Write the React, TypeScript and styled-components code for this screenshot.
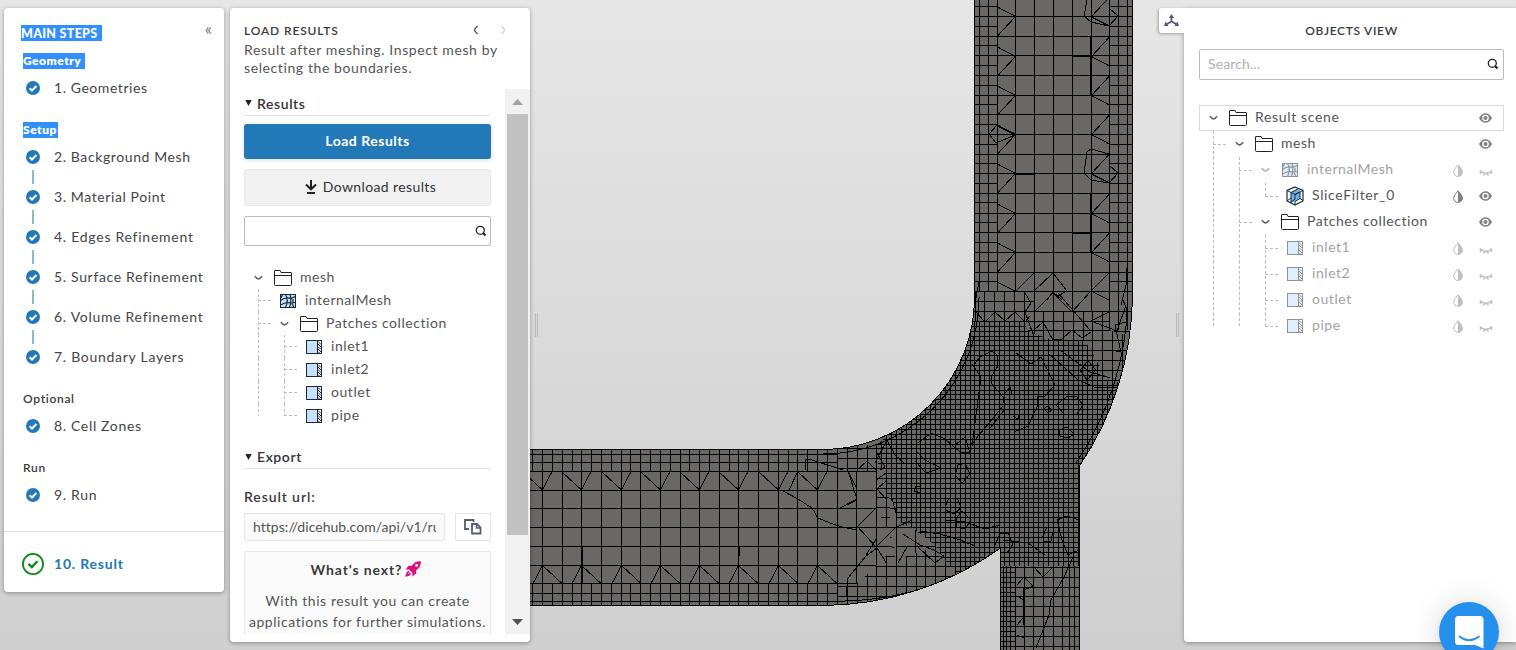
import React from 'react';
import styled, { createGlobalStyle, css } from 'styled-components';

const Global = createGlobalStyle`
  * { box-sizing: border-box; }
  html, body { margin: 0; height: 100%; overflow: hidden; }
  body {
    font-family: Lato, "Noto Sans", sans-serif;
    font-size: 14px;
    letter-spacing: 0.6px;
    color: #444;
    background: linear-gradient(#e6e6e6, #cfcfcf);
    font-variant-ligatures: none;
  }
`;

/* ---------- page frame ---------- */

const Page = styled.main`
  position: relative;
  height: 650px;
  width: 1516px;
  overflow: hidden;
  display: flex;
  align-items: flex-start;
  padding: 8px 0 0 4px;
  background: linear-gradient(#e6e6e6, #cfcfcf);
`;

const Viewport = styled.svg`
  position: absolute;
  inset: 0;
`;

const panel = css`
  position: relative;
  background: #fff;
  border-radius: 4px;
  box-shadow: 0 1px 4px rgba(0, 0, 0, 0.35);
`;

const StepsPanel = styled.nav`
  ${panel}
  width: 220px;
  height: 584px;
  margin-right: 6px;
`;

const DetailPanel = styled.section`
  ${panel}
  width: 300px;
  height: 634px;
  display: flex;
  flex-direction: column;
`;

const ObjectsPanel = styled.aside`
  ${panel}
  border-radius: 0 0 0 4px;
  width: 332px;
  height: 634px;
  padding: 0 12px 0 15px;
`;

const Handle = styled.div`
  width: 3px;
  height: 24px;
  border: solid #b9b9b9;
  border-width: 0 1px;
  margin-top: 305px;
`;

const LeftHandle = styled(Handle)`
  margin-left: 5px;
  margin-right: auto;
`;

const RightHandle = styled(Handle)`
  margin-right: 5px;
`;

const Title = styled.h1`
  margin: 0;
  font-size: 12px;
  line-height: 16px;
  font-weight: 600;
  letter-spacing: 0.86px;
  color: #3a3a3a;
`;

/* ---------- steps ---------- */

const StepsHeader = styled.header`
  display: flex;
  justify-content: space-between;
  padding: 17px 12px 12px 17px;
`;

const MainTitle = styled(Title)`
  width: 81px;
  height: 16px;
  line-height: 17px;
  font-size: 12.5px;
  font-weight: 900;
  letter-spacing: 0.3px;
  color: #fff;
  background: #338fff;
`;

const Collapse = styled.span`
  font-size: 17px;
  line-height: 7px;
  letter-spacing: 0;
  color: #777;
`;

const Group = styled.section`
  margin-bottom: 14px;
`;

const GroupLabel = styled.h2<{ $selected?: number }>`
  margin: 0 0 -1px 19px;
  font-size: 12px;
  line-height: 16px;
  height: 16px;
  font-weight: 600;
  letter-spacing: 0.7px;
  color: #3a3a3a;
  white-space: nowrap;
  ${p => p.$selected && css`
    width: ${p.$selected}px;
    background: #338fff;
    color: #fff;
    font-weight: 800;
    letter-spacing: 0.5px;
  `}
`;

const StepRow = styled.div`
  position: relative;
  display: flex;
  align-items: center;
  height: 40px;
  padding-left: 22px;
  gap: 14px;
  color: #444;
`;

const StepName = styled.span<{ $ls: number }>`
  padding-bottom: 2px;
  letter-spacing: ${p => p.$ls}px;
  white-space: nowrap;
`;

const Connector = styled.i`
  position: absolute;
  left: 28px;
  top: 33px;
  width: 2px;
  height: 14px;
  background: #8bb7da;
`;

const ResultStep = styled.footer`
  display: flex;
  align-items: center;
  height: 61px;
  margin-top: 16px;
  padding: 4px 0 0 18px;
  gap: 10px;
  border-top: 1px solid #e2e2e2;
  color: #2379b7;
  font-weight: 700;
`;

const StepGroups = styled.div`
  height: 462px;
`;

const CheckDot = () => (
  <svg width="14" height="14" viewBox="0 0 14 14">
    <circle cx="7" cy="7" r="7" fill="#2379b7" />
    <path d="M3.6 7.2 6 9.5 10.4 5" fill="none" stroke="#fff" strokeWidth="2" />
  </svg>
);

const ResultCheck = () => (
  <svg width="22" height="22" viewBox="0 0 22 22">
    <circle cx="11" cy="11" r="10.1" fill="#fff" stroke="#0a8a12" strokeWidth="1.8" />
    <path d="M6.5 10.8 9.8 14l5.6-5.8" fill="none" stroke="#0a8a12" strokeWidth="2.3" />
  </svg>
);

/* ---------- detail panel ---------- */

const DetailHeader = styled.header`
  display: flex;
  align-items: center;
  padding: 15px 23px 0 14px;
  height: 31px;
`;

const HeaderArrows = styled.span`
  display: flex;
  gap: 19px;
  margin: -2px 0 0 auto;
`;

const Intro = styled.p`
  margin: 2px 14px 0;
  line-height: 18px;
  letter-spacing: 0.6px;
  color: #555;
  height: 48px;
  white-space: pre;
`;

const ScrollArea = styled.div`
  display: flex;
  height: 545px;
`;

const ScrollBody = styled.div`
  flex: 1;
  height: 545px;
  overflow: hidden;
  padding: 0 14px;
`;

const ScrollTrack = styled.div`
  width: 25px;
  background: #f1f1f1;
  display: flex;
  flex-direction: column;
  align-items: center;
`;

const ScrollButton = styled.span`
  height: 25px;
  display: flex;
  align-items: center;
`;

const Thumb = styled.div`
  width: 21px;
  height: 421px;
  margin-bottom: auto;
  background: #c1c1c1;
`;

const SectionTitle = styled.h2`
  display: flex;
  align-items: center;
  gap: 5px;
  height: 24px;
  margin: 0;
  padding: 0 0 0 1px;
  border-bottom: 1px solid #e5e5e5;
  font-size: 14px;
  font-weight: 600;
  letter-spacing: 0.58px;
  color: #333;
`;

const ResultsTitle = styled(SectionTitle)`
  height: 27px;
  padding-top: 2px;
`;

const ExportTitle = styled(SectionTitle)`
  margin-top: 18px;
`;

const PrimaryButton = styled.button`
  display: block;
  width: 247px;
  height: 35px;
  margin-top: 8px;
  padding: 0 0 2px;
  border: 0;
  border-radius: 3px;
  background: #2379b7;
  color: #fff;
  font: 700 14px Lato, sans-serif;
  letter-spacing: 0.52px;
  box-shadow: 0 1px 4px rgba(0, 0, 0, 0.15);
`;

const SecondaryButton = styled.button`
  display: flex;
  align-items: center;
  justify-content: center;
  gap: 6px;
  width: 247px;
  height: 37px;
  margin-top: 10px;
  padding: 0 0 2px 6px;
  border: 1px solid #e6e6e6;
  border-radius: 3px;
  background: #f1f1f1;
  color: #333;
  font: 400 14px Lato, sans-serif;
  letter-spacing: 0.38px;
`;

const SearchBox = styled.div`
  display: flex;
  align-items: center;
  justify-content: space-between;
  border: 1px solid #bbb;
  border-radius: 2px;
  height: 30px;
  margin-top: 10px;
  padding: 0 3px 1px 8px;
  color: #b0b0b0;
  letter-spacing: 0.11px;
`;

const ObjectSearch = styled(SearchBox)`
  height: 31px;
  margin-top: 10px;
  padding: 0 4px 2px 8px;
`;

const FieldLabel = styled.div`
  margin: 20px 0 8px;
  line-height: 16px;
  font-weight: 600;
  letter-spacing: 0.9px;
  color: #3a3a3a;
`;

const UrlRow = styled.div`
  display: flex;
  gap: 10px;
`;

const UrlField = styled.div`
  width: 201px;
  height: 28px;
  padding: 0 8px;
  border: 1px solid #e5e5e5;
  border-radius: 2px;
  background: #fafafa;
`;

const UrlText = styled.div`
  overflow: hidden;
  white-space: nowrap;
  line-height: 26px;
  letter-spacing: 0.04px;
  color: #555;
`;

const CopyButton = styled.button`
  width: 36px;
  height: 28px;
  padding: 0;
  display: flex;
  align-items: center;
  justify-content: center;
  border: 1px solid #e5e5e5;
  background: #fff;
`;

const NextCard = styled.div`
  height: 120px;
  margin-top: 10px;
  padding-top: 7px;
  border: 1px solid #e8e8e8;
  border-radius: 2px;
  background: #fafafa;
  text-align: center;
`;

const NextTitle = styled.div`
  display: flex;
  justify-content: center;
  align-items: center;
  gap: 3px;
  height: 20px;
  padding-right: 3px;
  font-weight: 700;
  letter-spacing: 0.88px;
  color: #3a3a3a;
`;

const NextText = styled.p`
  margin: 11px 0 0;
  line-height: 21px;
  letter-spacing: 0.56px;
  color: #555;
  white-space: pre;
`;

/* ---------- tree ---------- */

const Tree = styled.div<{ $row: number }>`
  display: grid;
  grid-auto-rows: ${p => p.$row}px;
  --lift: 2px;
`;

const DetailTree = styled(Tree)`
  margin: 20px 0 0 1px;
`;

const ObjectTree = styled(Tree)`
  margin: 25px 0 0;
  --lift: 4px;
`;

const TreeRow = styled.div<{ $boxed?: boolean; $faded?: boolean }>`
  display: flex;
  align-items: center;
  border: 1px solid ${p => (p.$boxed ? '#dadada' : 'transparent')};
  border-width: ${p => (p.$boxed ? '1px' : '0 1px')};
  color: #555;
  --fade: ${p => (p.$faded ? 0.5 : 1)};
`;

const PlainRow = styled(TreeRow)`
  border-width: 0;
`;

const Guide = styled.span<{ $tick?: boolean; $half?: boolean }>`
  align-self: stretch;
  width: 26px;
  background-image:
    repeating-linear-gradient(#bdbdbd 0 3px, transparent 3px 5px),
    repeating-linear-gradient(90deg, #bdbdbd 0 3px, transparent 3px 5px);
  background-repeat: no-repeat;
  background-position: 13px 0, 13px 50%;
  background-size: 1px ${p => (p.$half ? '50%' : '100%')}, ${p => (p.$tick ? '13px' : '0')} 1px;
`;

const ChevronCell = styled.span`
  width: 26px;
  display: flex;
  justify-content: center;
  opacity: var(--fade);
`;

const IconCell = styled.span<{ $l: number; $r: number }>`
  display: flex;
  margin: 0 ${p => p.$r}px 0 ${p => p.$l}px;
  opacity: var(--fade);
`;

const Name = styled.span<{ $ls?: number }>`
  padding-bottom: var(--lift);
  letter-spacing: ${p => p.$ls ?? 0.55}px;
  opacity: calc(0.1 + 0.9 * var(--fade));
  white-space: nowrap;
`;

const Actions = styled.span<{ $closed?: boolean }>`
  display: flex;
  align-items: center;
  gap: 16px;
  margin-left: auto;
  padding-right: ${p => (p.$closed ? 10 : 11)}px;
  opacity: var(--fade);
`;

const Chevron = () => (
  <svg width="9" height="6" viewBox="0 0 9 6">
    <path d="M.8 1.2 Q3 3.8 4.5 4 Q6 3.8 8.2 1.2" fill="none" stroke="#565d70" strokeWidth="1.4" />
  </svg>
);

const Folder = () => (
  <svg width="18" height="16" viewBox="0 0 18 16">
    <path d="M.5 14.5V1Q.5.5 1 .5H6.2L7 2.5H17Q17.5 2.5 17.5 3V14.5Q17.5 15.5 16.500 15.500H1.500Q.5 15.500.5 14.500ZM.5 5.500H17.500" fill="#fff" stroke="#222" />
  </svg>
);

const MeshIcon = () => (
  <svg width="16" height="14" viewBox="0 0 16 14">
    <rect x=".5" y=".5" width="15" height="13" fill="#c5e1fd" stroke="#1c2836" />
    <path d="M5.500.5Q9 6 5.500 13.500M10 .5Q12 7 9.500 13.500M.5 6.500Q5 3 11 4.300L15.500 2.500M.5 11Q6 7.500 11 9L15.500 8.500M2.500 1 1 4M13 5V8.500M12 9.500 14 13.500" fill="none" stroke="#1c2836" strokeWidth="1.200" />
  </svg>
);

const PatchIcon = () => (
  <svg width="16" height="14" viewBox="0 0 16 14">
    <rect x=".5" y=".5" width="15" height="13" fill="#c5e1fd" stroke="#1c2836" />
    <rect x="12" y="1" width="3" height="12" fill="#fff" />
    <path d="M11.500 1V13M12 1.500 15 4.500M12 4 15 7M12 6.500 15 9.500M12 9 15 12M12 11.500 13.500 13" fill="none" stroke="#1c2836" strokeWidth="1" />
  </svg>
);

const SliceIcon = () => (
  <svg width="18" height="20" viewBox="0 0 18 20">
    <path d="M9 1 17 4.500V15L9 19 1 15V4.500Z" fill="#fff" stroke="#1c2836" strokeWidth="1.200" />
    <path d="M5 6.500 11.500 3 14 4.500V12.500L9.500 15.500 5 16.500Z" fill="#6cb0f2" />
    <path d="M1 4.500 5 6.500 9 8.500 17 4.500M9 8.500V13L5 16.500V6.500L12 3M9 8.500 14 6V12.500L9 15.500V19M1 15 5 12M14 12.500 17 14.500" fill="none" stroke="#1c2836" />
  </svg>
);

const Eye = () => (
  <svg width="13" height="10" viewBox="0 0 13 10">
    <path d="M0 5Q2.500.2 6.500.2T13 5Q10.500 9.800 6.500 9.800T0 5Z" fill="#808080" />
    <circle cx="6.500" cy="5" r="3.300" fill="#fff" />
    <circle cx="6.500" cy="5" r="2" fill="#808080" />
  </svg>
);

const EyeClosed = () => (
  <svg width="14" height="14" viewBox="0 0 14 14">
    <path d="M.8 7.500Q7 13.500 13.200 7.500M2.600 9 1 10.800M5.400 10.300 4.800 12.400M8.600 10.300 9.200 12.400M11.400 9 13 10.800" fill="none" stroke="#808080" strokeWidth="1.700" />
  </svg>
);

const Drop = () => (
  <svg width="10" height="13" viewBox="0 0 10 13">
    <path d="M5 .8Q.6 5.500.6 8.200A4.400 4.200 0 0 0 5 12.400 4.400 4.200 0 0 0 9.400 8.200Q9.400 5.500 5 .8Z" fill="#fff" stroke="#808080" />
    <path d="M5 .5Q9.700 5.500 9.700 8.200A4.600 4.400 0 0 1 5 12.600Z" fill="#808080" />
  </svg>
);

const Search = () => (
  <svg width="12" height="12" viewBox="0 0 12 12">
    <circle cx="5.300" cy="5.300" r="4" fill="none" stroke="#222" strokeWidth="1.300" />
    <path d="M7.800 7.800 10.500 10.500" stroke="#222" strokeWidth="2" />
  </svg>
);

type Kind = 'folder' | 'mesh' | 'patch' | 'slice';
const icons = { folder: Folder, mesh: MeshIcon, patch: PatchIcon, slice: SliceIcon };

interface Node {
  name: string;
  kind: Kind;
  depth: number;
  open?: boolean;
  hidden?: boolean;
  drop?: boolean;
  last?: boolean;
  end?: boolean;
  ls?: number;
}

const patches = (hidden: boolean, depth: number): Node[] => [
  { name: 'inlet1', kind: 'patch', depth, hidden, drop: true },
  { name: 'inlet2', kind: 'patch', depth, hidden, drop: true },
  { name: 'outlet', kind: 'patch', depth, hidden, drop: true },
  { name: 'pipe', kind: 'patch', depth, hidden, drop: true, last: true, end: true },
];

const meshNodes: Node[] = [
  { name: 'mesh', kind: 'folder', depth: 0, open: true },
  { name: 'internalMesh', kind: 'mesh', depth: 1, ls: 0.5 },
  { name: 'Patches collection', kind: 'folder', depth: 1, open: true },
  ...patches(false, 2),
];

const sceneNodes: Node[] = [
  { name: 'Result scene', kind: 'folder', depth: 0, open: true, ls: 0.66 },
  { name: 'mesh', kind: 'folder', depth: 1, open: true },
  { name: 'internalMesh', kind: 'mesh', depth: 2, open: true, hidden: true, drop: true, ls: 0.5 },
  { name: 'SliceFilter_0', kind: 'slice', depth: 3, drop: true, last: true, ls: 0.65 },
  { name: 'Patches collection', kind: 'folder', depth: 2, open: true },
  ...patches(true, 3),
];

function RowContent({ node }: { node: Node }) {
  const Icon = icons[node.kind];
  const left = node.open ? (node.kind === 'folder' ? 3 : 4) : node.kind === 'slice' ? 8 : 9;
  const right = node.kind === 'folder' ? 8 : node.kind === 'slice' ? 8 : 9;
  return (
    <>
      {Array.from({ length: node.depth }, (_, i) => (
        <Guide key={i} $tick={i === node.depth - 1} $half={node.end || (node.last && i === node.depth - 1)} />
      ))}
      {node.open && <ChevronCell><Chevron /></ChevronCell>}
      <IconCell $l={left} $r={right}><Icon /></IconCell>
      <Name $ls={node.ls}>{node.name}</Name>
    </>
  );
}

/* ---------- objects panel extras ---------- */

const ObjectsTitle = styled(Title)`
  padding-top: 15px;
  height: 31px;
  text-align: center;
  letter-spacing: 0.68px;
`;

const AxesTab = styled.div`
  position: absolute;
  left: -25px;
  top: 0;
  width: 25px;
  height: 25px;
  display: flex;
  align-items: center;
  justify-content: center;
  border-radius: 3px 0 0 3px;
  background: #fff;
  box-shadow: -1px 1px 3px rgba(0, 0, 0, 0.3);
`;

const TabBridge = styled.div`
  position: absolute;
  left: 0;
  top: 0;
  width: 5px;
  height: 28px;
  background: #fff;
`;

const ChatBubble = styled.div`
  position: absolute;
  left: 1439px;
  top: 602px;
  width: 60px;
  height: 60px;
  border-radius: 50%;
  background: #2590eb;
  box-shadow: 0 1px 6px rgba(0, 0, 0, 0.06), 0 2px 32px rgba(0, 0, 0, 0.16);
  display: flex;
  justify-content: center;
  padding-top: 14px;
`;

/* ---------- mesh slice drawing ---------- */

const range = (from: number, to: number, step: number) => {
  const out: number[] = [];
  for (let v = from; v <= to + 0.01; v += step) out.push(Math.round(v));
  return out;
};

const gridPath = (xs: number[], ys: number[], x0: number, x1: number, y0: number, y1: number) =>
  xs.map(x => `M${x + 0.5} ${y0}V${y1}`).join('') + ys.map(y => `M${x0} ${y + 0.5}H${x1}`).join('');

const OUTLINE =
  'M520 449.500H822A152 152 0 0 0 974.500 297V-5H1132.500V297A310 310 0 0 1 1079.500 466V660H1000.500V548A309 309 0 0 1 822 605.500H520Z';

const riserCols = [997, 1015, 1034, 1053, 1072, 1091, 1109];
const riserRows = range(16, 410, 19.66);
const runCols = range(542, 960, 19.65);
const runRows = [471, 490, 508, 527, 546, 565, 583];

const riser = gridPath(riserCols, riserRows, 974, 1133, 0, 400);
const riserSides =
  gridPath([979, 988, 1118, 1127], [], 0, 0, 0, 330) +
  range(6.2, 300, 19.63).map(y => `M974 ${y + 0.5}H997M1109 ${y + 0.5}H1133`).join('');
const run =
  runCols.map(x => `M${x + 0.5} 449V606`).join('') + runRows.map(y => `M530 ${y + 0.5}H960`).join('');
const runSides =
  [454, 462, 593, 601].map(y => `M530 ${y + 0.5}H840`).join('') +
  range(532.2, 830, 19.65).map(x => `M${x + 0.5} 449V471M${x + 0.5} 583V606`).join('');

const riserTriangles = [16, 56, 95, 134, 173, 213, 252]
  .map(y => `M997.500 ${y - 9}L1015.500 ${y + 0.5}L997.500 ${y + 20}M1109.500 ${y - 19}L1091.500 ${y + 0.5}L1109.500 ${y + 10}`)
  .join('');
const runTriangles = range(542, 830, 39.3)
  .map(x => `M${x - 19.5} 471.500L${x + 0.5} 490L${x + 10} 471.500M${x - 9} 583.500L${x + 0.5} 565.500L${x + 20} 583.500`)
  .join('');

/* Regions where each refinement level replaces the coarser one. */
const UPPER_MEDIUM = 'M970 291H1034V312L1053 340 1034 350H960ZM1034 312H1109V330L1125 335V372L1140 400H1080L1034 350Z';
const LOWER_MEDIUM = 'M837 445H890V540L896 560 925 550 990 575 935 611H837V584H857L877 565 896 546 886 527 876 508V471H837Z';
const FINE = 'M960 322H1022L1030 332 1055 341H1085L1092 352 1108 382H1130L1085 470H1080V567H1000V548L960 576 945 560 935 545 915 530 896 520V505L886 495V472L878 465V444L905 420 950 375Z';
const BRANCH = 'M1000 566H1080V660H1000Z';

const mediumGrid = gridPath(range(837.1, 1140, 9.82), range(291.2, 610, 9.82), 837, 1140, 291, 611);
const fineGrid = gridPath(range(837, 1135, 4.91), range(311, 660, 4.91), 830, 1135, 300, 660);
const branchGrid =
  gridPath([1003, 1006, 1010, 1015, 1024, 1033, 1043, 1053, 1062, 1069, 1074], [], 0, 0, 566, 650) +
  range(567, 650, 9.82).map(y => `M1015 ${y + 0.5}H1080`).join('') +
  range(567, 650, 4.91).map(y => `M1000 ${y + 0.5}H1015`).join('');

const extraLines =
  'M1087 0 1084 16 1091 22 1109 26 1091 17M1109 8 1118 16 1109 26' +
  'M1091 149 1109 154M1091 149 1087 152 1084 173 1091 180 1109 183 1091 174M1109 165 1118 173 1109 183' +
  'M997 125 989 134 996 143 1015 135 997 126 1016 134' +
  'M997 282 1015 291M1016 291 1034 273M1034 291 1053 273 1067 291 1058 296M1091 291 1109 273M1091 291 1109 300M1047 300 1053 292 1062 300' +
  'M976 298 979 281 980 268M1126 268V285L1121 305' +
  'M783 491 798 499 812 508 818 518 830 523 842 527 857 530M840 508 857 499 848 471M789 490 798 471M805 470V460L809 459 843 470' +
  'M975 311 985 322 995 312 1005 321 1015 312 1025 322 1030 316M1025 293 1031 303 1025 312 1033 334' +
  'M1035 311 1053 293 1072 312 1091 291M1058 293 1090 330M1091 321 1109 312M1091 321 1117 331 1126 305M1034 330 1043 322 1053 340 1062 339 1072 330 1082 338 1091 332' +
  'M974 365 980 357 992 351 997 355 998 366 991 377 992 384 1003 397 1005 409 990 428' +
  'M972 364 981 377 978 400 975 423 972 446M1016 353 1031 364 1041 357 1055 385 1045 396 1037 397 1037 407 1028 426 1014 432M1049 354 1063 366 1077 379 1094 387H1117' +
  'M1056 405 1066 397 1076 396 1083 405 1077 414 1064 414ZM1044 409 1047 406 1052 410 1048 413ZM1059 430 1067 427 1074 434 1068 438 1060 436Z' +
  'M1080 370 1088 361 1096 370 1087 380ZM1005 393 1010 387 1012 395M1013 416 1018 419 1019 414' +
  'M918 443 931 433 945 439 960 452 970 453 965 437 955 445M970 446 1003 406M916 451 925 460 941 468 926 473 915 461M955 475 958 465 965 463 970 474 962 483 955 475' +
  'M914 491 916 486 921 487M914 491 921 493M945 507 949 498 957 498 961 507 955 514 945 510ZM956 519 962 511 971 520 965 529 957 527Z' +
  'M875 463 887 440 895 455 905 464M876 451 885 467 880 470M867 461 857 470M867 461 877 471M876 480 886 473M886 481 877 489 886 499M848 471 857 489' +
  'M840 508 857 500M892 498 897 517M858 526 876 508M857 526 876 547 895 528 912 520M877 548 866 556 848 578 846 596M877 548 887 564M898 563 907 547 917 546 935 563 944 556 934 550 920 545 903 534M866 555 877 538' +
  'M1042 538 1047 527 1054 527 1051 541 1043 541M1057 520 1067 516 1079 520M1057 520 1062 540 1068 555 1079 550M1074 555 1064 577 1051 600 1049 615 1036 648' +
  'M1034 567 1043 577 1053 567M1062 567V577M1024 577 1033 586 1024 590M1017 585 1023 578M1017 596 1024 600M1017 625 1023 618M1017 635 1024 638' +
  'M995 545 1000 534 1008 533 1013 544 1007 553M920 531 940 534 960 540 975 546M945 520 965 522 985 529 1000 525M1003 540 1028 543 1045 555' +
  'M1123 300 1127 310 1126 322 1115 325 1121 352 1111 350M1060 350 1090 372 1110 378';

const FILL = '#696864';

const MeshView = () => (
  <Viewport width="1516" height="650" viewBox="0 0 1516 650">
    <defs>
      <clipPath id="pipe"><path d={OUTLINE} /></clipPath>
      <clipPath id="medium"><path d={UPPER_MEDIUM + LOWER_MEDIUM} /></clipPath>
      <clipPath id="fine"><path d={FINE} /></clipPath>
    </defs>
    <g clipPath="url(#pipe)" fill="none" stroke="#000" shapeRendering="crispEdges">
      <path d={OUTLINE} fill={FILL} stroke="none" />
      <path d={riser + riserSides + run + runSides} />
      <path d={riserTriangles + runTriangles} />
      <path d="M1091 36V95M1091 193V252M1073 56H1091M1015 174H1034M1073 233H1091M582 547V583M739 547V556" strokeWidth="2" />
      <path d={UPPER_MEDIUM + LOWER_MEDIUM} fill={FILL} stroke="none" />
      <path d={mediumGrid} clipPath="url(#medium)" />
      <path d={FINE} fill={FILL} stroke="none" />
      <path d={fineGrid} clipPath="url(#fine)" />
      <path d={BRANCH} fill={FILL} stroke="none" />
      <path d={branchGrid} />
      <path d="M1024 587V625" strokeWidth="2" />
      <path d={extraLines} />
      <path d="M822 454A156 156 0 0 0 979 297M1128 297A305 305 0 0 1 1076 463M1000 553A304 304 0 0 1 822 601" />
    </g>
    <path d={OUTLINE} fill="none" stroke="#000" shapeRendering="crispEdges" />
  </Viewport>
);

/* ---------- app ---------- */

interface Step { name: string; ls: number }

const groups: { label: string; selected?: number; steps: Step[] }[] = [
  { label: 'Geometry', selected: 62, steps: [{ name: '1. Geometries', ls: 0.56 }] },
  {
    label: 'Setup',
    selected: 35,
    steps: [
      { name: '2. Background Mesh', ls: 0.6 },
      { name: '3. Material Point', ls: 0.6 },
      { name: '4. Edges Refinement', ls: 0.74 },
      { name: '5. Surface Refinement', ls: 0.67 },
      { name: '6. Volume Refinement', ls: 0.71 },
      { name: '7. Boundary Layers', ls: 0.72 },
    ],
  },
  { label: 'Optional', steps: [{ name: '8. Cell Zones', ls: 0.66 }] },
  { label: 'Run', steps: [{ name: '9. Run', ls: 0.7 }] },
];

const Triangle = () => (
  <svg width="7" height="6" viewBox="0 0 7 6"><path d="M.3 0H6.700L3.500 6Z" fill="#222" /></svg>
);

export default function App() {
  return (
    <Page>
      <Global />
      <MeshView />

      <StepsPanel>
        <StepsHeader>
          <MainTitle>MAIN STEPS</MainTitle>
          <Collapse>«</Collapse>
        </StepsHeader>
        <StepGroups>
          {groups.map(g => (
            <Group key={g.label}>
              <GroupLabel $selected={g.selected}>{g.label}</GroupLabel>
              {g.steps.map((s, i) => (
                <StepRow key={s.name}>
                  <CheckDot />
                  <StepName $ls={s.ls}>{s.name}</StepName>
                  {i < g.steps.length - 1 && <Connector />}
                </StepRow>
              ))}
            </Group>
          ))}
        </StepGroups>
        <ResultStep><ResultCheck /><StepName $ls={0.81}>10. Result</StepName></ResultStep>
      </StepsPanel>

      <DetailPanel>
        <DetailHeader>
          <Title>LOAD RESULTS</Title>
          <HeaderArrows>
            <svg width="8" height="10" viewBox="0 0 8 10"><path d="M5.500 1Q2.500 4 2.500 5T5.500 9" fill="none" stroke="#4a5164" strokeWidth="1.400" /></svg>
            <svg width="8" height="10" viewBox="0 0 8 10"><path d="M2.500 1Q5.500 4 5.500 5T2.500 9" fill="none" stroke="#d0d0d0" strokeWidth="1.300" /></svg>
          </HeaderArrows>
        </DetailHeader>
        <Intro>{'Result after meshing. Inspect mesh by\nselecting the boundaries.'}</Intro>
        <ScrollArea>
          <ScrollBody>
            <ResultsTitle><Triangle />Results</ResultsTitle>
            <PrimaryButton>Load Results</PrimaryButton>
            <SecondaryButton>
              <svg width="12" height="14" viewBox="0 0 12 14"><path d="M6 0V9M1 4.500 6 9.300 11 4.500M2 13H10" fill="none" stroke="#222" strokeWidth="2" /></svg>
              Download results
            </SecondaryButton>
            <SearchBox><span /><Search /></SearchBox>
            <DetailTree $row={23}>
              {meshNodes.map(n => <PlainRow key={n.name}><RowContent node={n} /></PlainRow>)}
            </DetailTree>
            <ExportTitle><Triangle />Export</ExportTitle>
            <FieldLabel>Result url:</FieldLabel>
            <UrlRow>
              <UrlField><UrlText>https://dicehub.com/api/v1/ru</UrlText></UrlField>
              <CopyButton>
                <svg width="18" height="16" viewBox="0 0 18 16">
                  <path d="M5 10H1V1H9.500V3" fill="none" stroke="#565d70" strokeWidth="1.800" />
                  <path d="M8 5H13L16.500 8.500V14.500H8Z" fill="#fff" stroke="#565d70" strokeWidth="1.800" />
                  <path d="M12.500 5V9H16.500" fill="none" stroke="#565d70" strokeWidth="1.500" />
                </svg>
              </CopyButton>
            </UrlRow>
            <NextCard>
              <NextTitle>
                What's next?
                <svg width="16" height="16" viewBox="0 0 16 16">
                  <path d="M15.800.2Q10.500-.2 7.800 3.400L6.800 4.800H3.500L.6 8.800 4 8.600 7.400 12 7.200 15.400 11.200 12.500V9.200L12.600 8.200Q16.200 5.500 15.800.2ZM3.600 10Q1 10.500.3 15.700 5.500 15 6 12.400L5 11.300Q4 13 2.500 13.500 3 12 4.700 11Z" fill="#d9127c" />
                  <circle cx="11.600" cy="4.400" r="1.400" fill="#fff" />
                </svg>
              </NextTitle>
              <NextText>{'With this result you can create\napplications for further simulations.'}</NextText>
            </NextCard>
          </ScrollBody>
          <ScrollTrack>
            <ScrollButton><svg width="11" height="6"><path d="M0 6 5.500 0 11 6Z" fill="#a3a3a3" /></svg></ScrollButton>
            <Thumb />
            <ScrollButton><svg width="11" height="6"><path d="M0 0 5.500 6 11 0Z" fill="#505050" /></svg></ScrollButton>
          </ScrollTrack>
        </ScrollArea>
      </DetailPanel>

      <LeftHandle />
      <RightHandle />

      <ObjectsPanel>
        <AxesTab>
          <svg width="15" height="13" viewBox="0 0 15 13">
            <path d="M7.500 2V7.500M7.500 7.500 2 10.500M7.500 7.500 13 10.500" fill="none" stroke="#565d70" strokeWidth="1.800" />
            <path d="M7.500 0 10.200 4H4.800ZM0 11.900 1.500 7.500 4.600 12ZM15 11.900 13.500 7.500 10.400 12Z" fill="#565d70" />
          </svg>
        </AxesTab>
        <TabBridge />
        <ObjectsTitle>OBJECTS VIEW</ObjectsTitle>
        <ObjectSearch><span>Search...</span><Search /></ObjectSearch>
        <ObjectTree $row={26}>
          {sceneNodes.map((n, i) => (
            <TreeRow key={n.name} $boxed={i === 0} $faded={n.hidden}>
              <RowContent node={n} />
              <Actions $closed={n.hidden}>
                {n.drop && <Drop />}
                {n.hidden ? <EyeClosed /> : <Eye />}
              </Actions>
            </TreeRow>
          ))}
        </ObjectTree>
      </ObjectsPanel>

      <ChatBubble>
        <svg width="29" height="33" viewBox="0 0 29 33">
          <path d="M3.500 0H25Q28.500 0 28.500 3.500V32.500L20 29H3.500Q0 29 0 25.500V3.500Q0 0 3.500 0Z" fill="#fff" />
          <path d="M4.500 20.500Q14 28 24 20.500" fill="none" stroke="#2590eb" strokeWidth="1.800" strokeLinecap="round" />
        </svg>
      </ChatBubble>
    </Page>
  );
}
